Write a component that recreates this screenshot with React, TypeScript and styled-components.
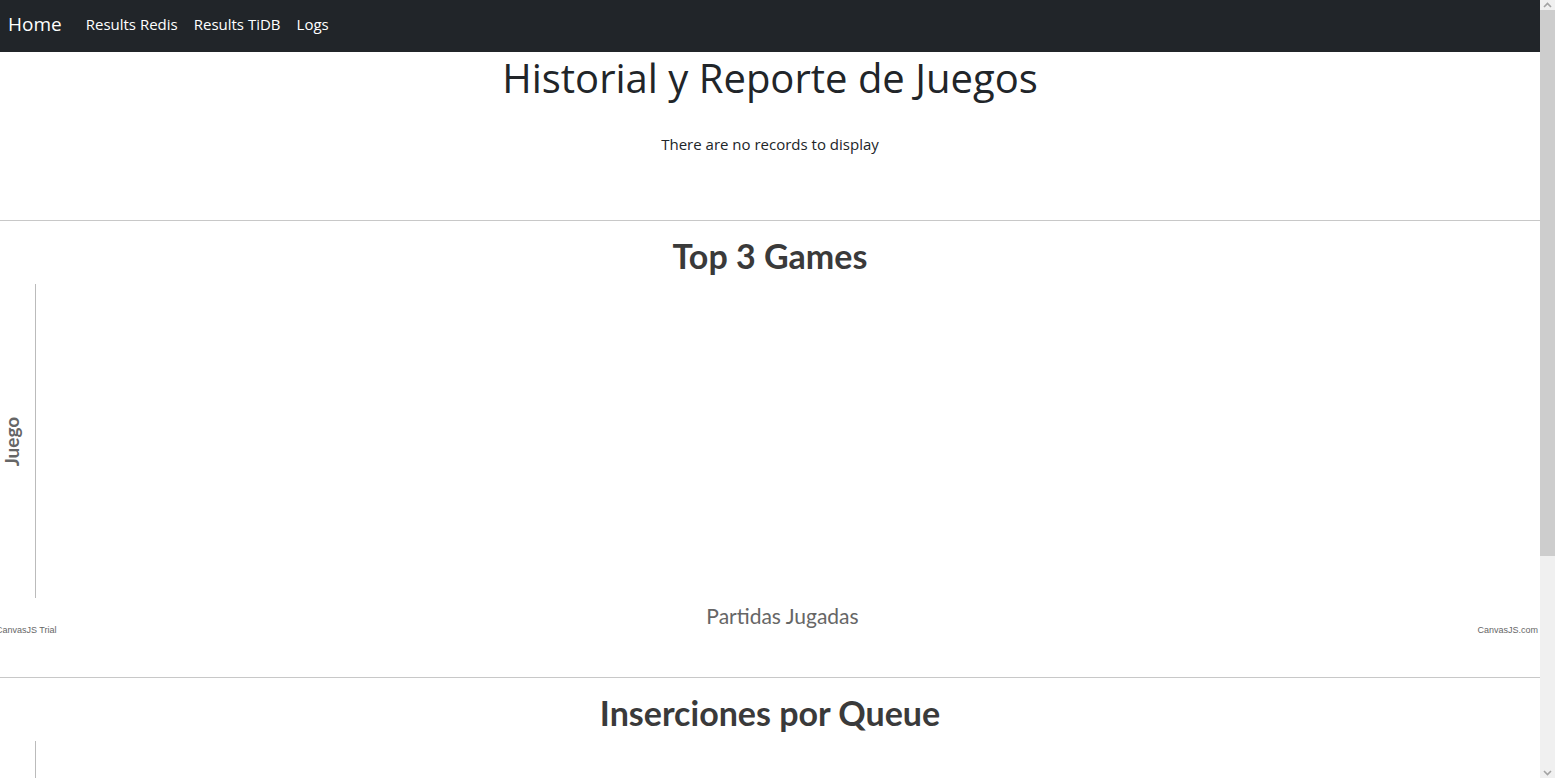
import React from "react";
import styled, { createGlobalStyle } from "styled-components";

const Global = createGlobalStyle`
  body {
    margin: 0;
    font-family: "Open Sans", "Noto Sans", sans-serif;
    color: #212529;
    background: #fff;
  }
`;

const Page = styled.div`
  padding-right: 15px;
`;

const NavBar = styled.nav`
  display: flex;
  align-items: center;
  height: 52px;
  padding: 0 8px 4px;
  background: #212529;
  box-sizing: border-box;
`;

const Brand = styled.a`
  font-size: 19px;
  color: #fff;
  margin-right: 24px;
  text-decoration: none;
`;

const NavLinks = styled.div`
  display: flex;
  gap: 16px;
`;

const NavLink = styled.a`
  font-size: 15px;
  color: #fff;
  text-decoration: none;
`;

const Main = styled.main`
  display: flex;
  flex-direction: column;
`;

const TableSection = styled.section`
  display: flex;
  flex-direction: column;
  align-items: center;
  padding-bottom: 66px;
`;

const PageTitle = styled.h1`
  margin: 2px 0 0;
  font-size: 40px;
  font-weight: 500;
  line-height: 48px;
  color: #212529;
`;

const EmptyMessage = styled.div`
  margin-top: 32px;
  font-size: 15px;
  line-height: 20px;
  color: #212529;
`;

const Divider = styled.hr`
  margin: 0;
  border: 0;
  border-top: 1px solid #c8c8c8;
  width: 100%;
`;

const ChartCard = styled.section<{ $plotHeight: number }>`
  display: grid;
  grid-template-columns: 35px 1fr;
  grid-template-rows: auto ${(p) => p.$plotHeight}px auto auto;
  align-content: start;
  height: 456px;
  padding-top: 15px;
  box-sizing: border-box;
  font-family: "Lato", "Open Sans", sans-serif;
`;

const ChartTitle = styled.h2`
  grid-column: 1 / -1;
  margin: 0 0 8px;
  text-align: center;
  font-size: 34px;
  font-weight: 700;
  line-height: 40px;
  color: #3a3a3a;
`;

const YAxisTitle = styled.div`
  display: flex;
  align-items: center;
  justify-content: center;
  padding-right: 12px;
`;

const RotatedLabel = styled.span`
  transform: rotate(-90deg);
  font-size: 19px;
  font-weight: 700;
  color: #666;
  white-space: nowrap;
`;

const Plot = styled.div`
  border-left: 1px solid #bbb;
`;

const XAxisTitle = styled.div`
  grid-column: 1 / -1;
  text-align: center;
  padding-left: 25px;
  margin-top: 6px;
  font-size: 21px;
  line-height: 24px;
  color: #666;
`;

const Credits = styled.div`
  grid-column: 1 / -1;
  display: flex;
  justify-content: space-between;
  margin-top: -4px;
  padding-right: 2px;
  font-family: "Liberation Sans", sans-serif;
  font-size: 9px;
  line-height: 12px;
  color: #666;
`;

const CreditLeft = styled.span`
  margin-left: -4px;
`;

const ScrollTrack = styled.div`
  position: fixed;
  top: 0;
  right: 0;
  width: 15px;
  height: 100vh;
  background: #f0f0f0;
  display: flex;
  flex-direction: column;
  align-items: center;
`;

const ScrollArrow = styled.svg`
  flex: none;
  width: 15px;
  height: 10px;
`;

const ScrollThumb = styled.div`
  width: 15px;
  height: 546px;
  background: #cdcdcd;
`;

const ScrollSpacer = styled.div`
  flex: 1;
`;

const charts = [
  { title: "Top 3 Games", y: "Juego", x: "Partidas Jugadas" },
  { title: "Inserciones por Queue", y: "Queue", x: "Inserciones" },
];

export default function App() {
  return (
    <>
      <Global />
      <Page>
        <NavBar>
          <Brand href="#">Home</Brand>
          <NavLinks>
            <NavLink href="#">Results Redis</NavLink>
            <NavLink href="#">Results TiDB</NavLink>
            <NavLink href="#">Logs</NavLink>
          </NavLinks>
        </NavBar>
        <Main>
          <TableSection>
            <PageTitle>Historial y Reporte de Juegos</PageTitle>
            <EmptyMessage>There are no records to display</EmptyMessage>
          </TableSection>
          {charts.map((c) => (
            <React.Fragment key={c.title}>
              <Divider />
              <ChartCard $plotHeight={314}>
                <ChartTitle>{c.title}</ChartTitle>
                <YAxisTitle>
                  <RotatedLabel>{c.y}</RotatedLabel>
                </YAxisTitle>
                <Plot />
                <XAxisTitle>{c.x}</XAxisTitle>
                <Credits>
                  <CreditLeft>CanvasJS Trial</CreditLeft>
                  <span>CanvasJS.com</span>
                </Credits>
              </ChartCard>
            </React.Fragment>
          ))}
        </Main>
      </Page>
      <ScrollTrack>
        <ScrollArrow viewBox="0 0 15 10">
          <path d="M4 7 L7.5 3.5 L11 7" fill="none" stroke="#a3a3a3" strokeWidth="1.6" />
        </ScrollArrow>
        <ScrollThumb />
        <ScrollSpacer />
        <ScrollArrow viewBox="0 0 15 10">
          <path d="M4 3 L7.5 6.5 L11 3" fill="none" stroke="#a3a3a3" strokeWidth="1.6" />
        </ScrollArrow>
      </ScrollTrack>
    </>
  );
}
